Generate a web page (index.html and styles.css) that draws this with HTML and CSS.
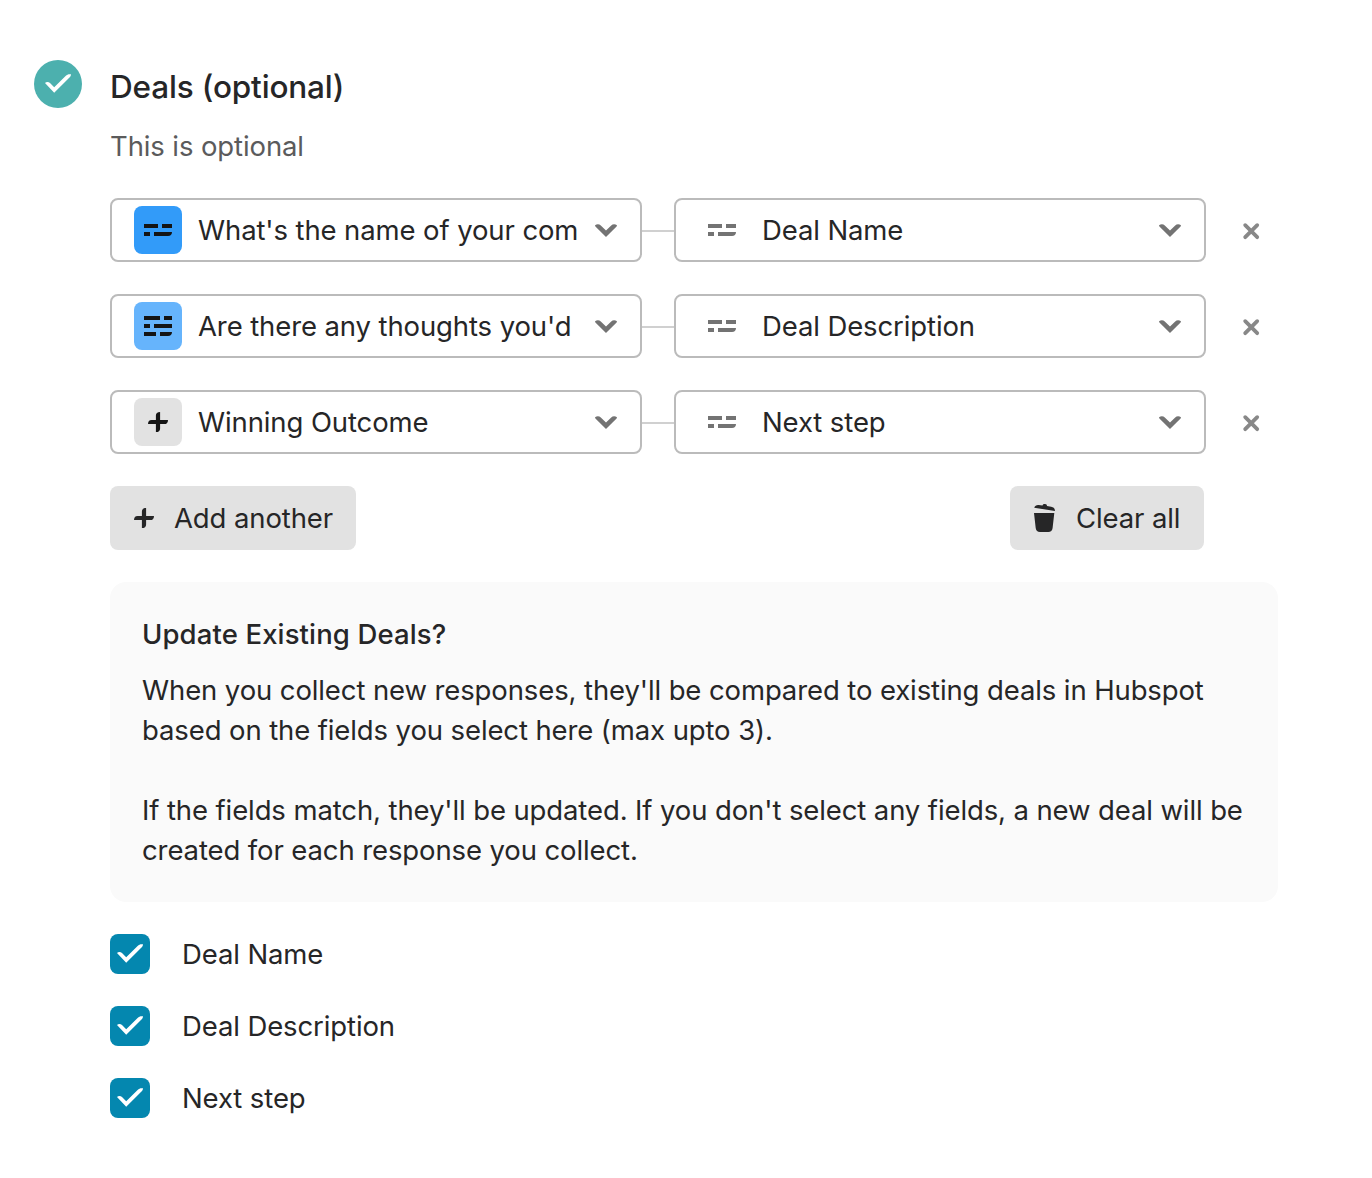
FILE: index.html
```html
<!DOCTYPE html>
<html lang="en">
<head>
<meta charset="utf-8">
<title>Deals</title>
<link rel="stylesheet" href="styles.css">
</head>
<body>
<svg class="sprite" aria-hidden="true">
  <symbol id="check" viewBox="0 0 26 19"><path d="M0 8.9C1.2 7.9 3.6 7.7 5 9.1L9.2 13.3L20.6 1.9C22.2.3 23.8 0 26 .3C26 1.5 25.5 2.5 24.5 3.5L9.2 18.8Z"/></symbol>
  <symbol id="chevron" viewBox="0 0 22 13"><path d="M0 1.2C2-.1 4.2-.1 5.8 1.5L11 6.5L16.2 1.5C17.8-.1 20-.1 22 1.2L21.6 2.5L11 13L.4 2.5Z"/></symbol>
  <symbol id="short" viewBox="0 0 28 12"><path d="M0 0H14V4H0ZM18 0H28V4H18ZM0 8H6V12H0ZM10 8H28C28 10.5 26.5 12 24 12H10Z"/></symbol>
  <symbol id="long" viewBox="0 0 28 20"><path d="M0 0H16V4H0ZM20 0H28V4H20ZM0 8H6V12H0ZM10 8H28V12H10ZM0 16H12V20H0ZM16 16H28C28 18.5 26.5 20 24 20H16Z"/></symbol>
  <symbol id="plus" viewBox="0 0 20 20"><path d="M7.9 3.6C7.9 1.2 9.4 0 12.1 0V7.9H20C20 10.6 18.8 12.1 16.4 12.1H12.1V16.4C12.1 18.8 10.6 20 7.9 20V12.1H0C0 9.4 1.2 7.9 3.6 7.9H7.9Z"/></symbol>
  <symbol id="cross" viewBox="0 0 18 18"><path d="M3.2 3.2L15.2 15.2M15.2 3.2L3.2 15.2" fill="none" stroke="currentColor" stroke-width="3.8" stroke-linecap="round"/></symbol>
  <symbol id="trash" viewBox="0 0 21 28"><path d="M.2 3.7C1 1.6 2.5.8 4.7 1L8.5 1.5C9 .3 9.8 0 11 .1C12.3.2 13 .8 13 2.1L17.2 2.8C19.7 3.2 20.9 4.6 21 7ZM0 9H20.3L18.6 24C18.3 26.7 16.8 28 14.3 28H6C3.5 28 2 26.7 1.7 24Z"/></symbol>
</svg>
<main class="step">
  <div class="badge"><svg class="check"><use href="#check"/></svg></div>
  <section class="content">
    <h1 class="title">Deals (optional)</h1>
    <p class="subtitle">This is optional</p>
    <div class="mappings">
      <div class="mapping">
        <div class="select"><span class="tile blue"><svg class="short"><use href="#short"/></svg></span><span class="label">What's the name of your com</span><svg class="chevron"><use href="#chevron"/></svg></div>
        <span class="link"></span>
        <div class="select"><span class="tile plain"><svg class="short"><use href="#short"/></svg></span><span class="label">Deal Name</span><svg class="chevron"><use href="#chevron"/></svg></div>
        <svg class="cross"><use href="#cross"/></svg>
      </div>
      <div class="mapping">
        <div class="select"><span class="tile sky"><svg class="long"><use href="#long"/></svg></span><span class="label">Are there any thoughts you'd</span><svg class="chevron"><use href="#chevron"/></svg></div>
        <span class="link"></span>
        <div class="select"><span class="tile plain"><svg class="short"><use href="#short"/></svg></span><span class="label">Deal Description</span><svg class="chevron"><use href="#chevron"/></svg></div>
        <svg class="cross"><use href="#cross"/></svg>
      </div>
      <div class="mapping">
        <div class="select"><span class="tile grey"><svg class="plus"><use href="#plus"/></svg></span><span class="label">Winning Outcome</span><svg class="chevron"><use href="#chevron"/></svg></div>
        <span class="link"></span>
        <div class="select"><span class="tile plain"><svg class="short"><use href="#short"/></svg></span><span class="label">Next step</span><svg class="chevron"><use href="#chevron"/></svg></div>
        <svg class="cross"><use href="#cross"/></svg>
      </div>
    </div>
    <div class="actions">
      <button class="button add"><svg class="plus"><use href="#plus"/></svg><span>Add another</span></button>
      <button class="button clear"><svg class="trash"><use href="#trash"/></svg><span>Clear all</span></button>
    </div>
    <div class="panel">
      <h2 class="panel-title">Update Existing Deals?</h2>
      <p class="panel-text">When you collect new responses, they'll be compared to existing deals in Hubspot<br>based on the fields you select here (max upto 3).</p>
      <p class="panel-text">If the fields match, they'll be updated. If you don't select any fields, a new deal will be<br>created for each response you collect.</p>
    </div>
    <div class="options">
      <div class="option"><span class="box"><svg class="check"><use href="#check"/></svg></span><span>Deal Name</span></div>
      <div class="option"><span class="box"><svg class="check"><use href="#check"/></svg></span><span>Deal Description</span></div>
      <div class="option"><span class="box"><svg class="check"><use href="#check"/></svg></span><span>Next step</span></div>
    </div>
  </section>
</main>
</body>
</html>
```
FILE: styles.css
```css
* { box-sizing: border-box; }
body {
  margin: 0;
  background: #fff;
  color: #262627;
  font: 400 27.5px/40px Inter, "Liberation Sans", sans-serif;
  letter-spacing: -0.11px;
  white-space: nowrap;
}
h1, h2, p { margin: 0; }
svg { display: block; flex: none; fill: currentColor; }
.sprite { display: none; }
.check { width: 26px; height: 19px; color: #fff; }
.chevron { width: 22px; height: 13px; color: #737373; }
.short { width: 28px; height: 12px; }
.long { width: 28px; height: 20px; }
.plus { width: 20px; height: 20px; }
.trash { width: 21px; height: 28px; }
.cross { width: 18px; height: 18px; margin: 2px 0 0 36px; color: #888; }

.step { display: flex; gap: 28px; padding: 60px 94px 0 34px; }
.badge {
  flex: none;
  display: flex;
  justify-content: center;
  width: 48px;
  height: 48px;
  padding-top: 14px;
  border-radius: 50%;
  background: #4cb0ae;
}
.content { width: 1168px; padding-top: 7px; }
.title { font-size: 31.5px; font-weight: 500; line-height: 40px; letter-spacing: -0.16px; }
.subtitle { margin-top: 19px; color: #5b5b5c; }

.mappings { display: flex; flex-direction: column; gap: 32px; margin-top: 32px; }
.mapping { display: flex; align-items: center; }
.select {
  display: flex;
  align-items: center;
  width: 532px;
  height: 64px;
  padding: 0 23px 0 22px;
  border: 2px solid #bbb;
  border-radius: 8px;
}
.tile {
  display: flex;
  flex: none;
  align-items: center;
  justify-content: center;
  width: 48px;
  height: 48px;
  border-radius: 8px;
  color: #141414;
}
.blue { background: #329bf9; }
.sky { background: #66b4fc; }
.grey { background: #e2e2e2; }
.plain { color: #737373; }
.label { flex: 1; min-width: 0; margin: 0 16px; }
.link { width: 32px; height: 2px; margin-top: 2px; background: #d0d0d0; }

.actions { display: flex; justify-content: space-between; width: 1094px; margin-top: 32px; }
.button {
  display: flex;
  align-items: center;
  height: 64px;
  padding: 0 0 0 24px;
  border: 0;
  border-radius: 8px;
  background: #e2e2e2;
  color: inherit;
  font: inherit;
  letter-spacing: inherit;
}
.add { width: 246px; gap: 20px; }
.clear { width: 194px; gap: 21px; }

.panel { height: 320px; margin-top: 32px; padding: 32px; border-radius: 16px; background: #fafafa; }
.panel-title { margin-bottom: 16px; font-size: 27.5px; font-weight: 500; line-height: 40px; letter-spacing: 0.13px; }
.panel-text + .panel-text { margin-top: 40px; }

.options { display: flex; flex-direction: column; gap: 32px; margin-top: 32px; }
.option { display: flex; align-items: center; gap: 32px; height: 40px; }
.box { display: flex; justify-content: center; width: 40px; height: 40px; padding-top: 10px; border-radius: 8px; background: #0487af; }
```
